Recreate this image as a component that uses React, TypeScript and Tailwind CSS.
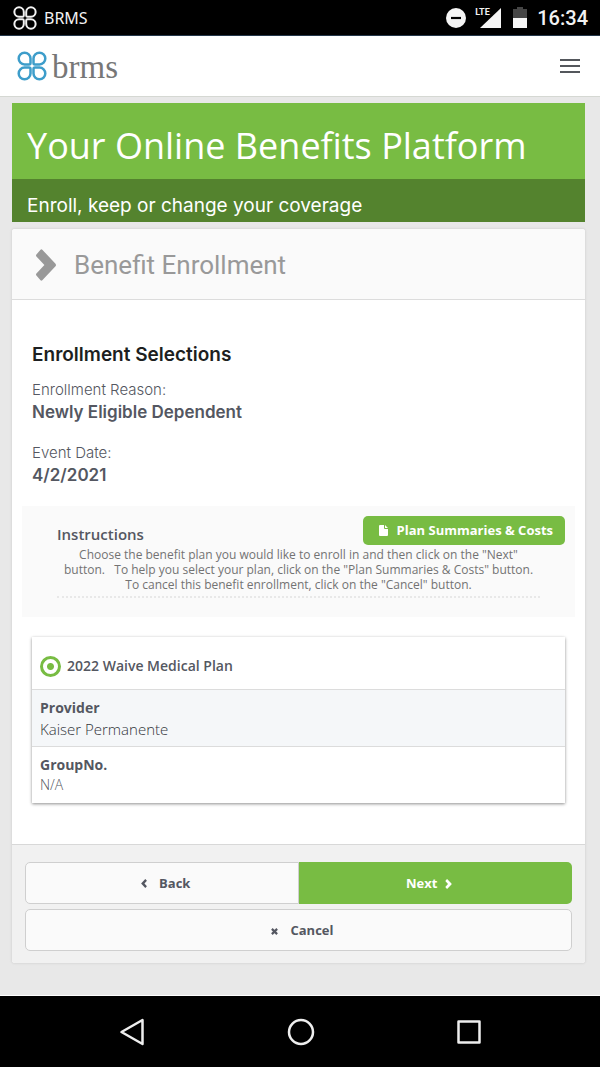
import type { ReactNode } from "react";

function Clover({ className, strokeWidth }: { className: string; strokeWidth: number }) {
  const petal = "M13.5 12V7.5A5.9 5.9 0 1 0 7.5 13.5H12Q13.5 13.5 13.5 12Z";
  return (
    <svg viewBox="0 0 30 30" className={className} fill="none" stroke="currentColor" strokeWidth={strokeWidth} strokeLinejoin="round" aria-hidden="true">
      <path d={petal} />
      <path d={petal} transform="matrix(-1 0 0 1 30 0)" />
      <path d={petal} transform="matrix(1 0 0 -1 0 30)" />
      <path d={petal} transform="matrix(-1 0 0 -1 30 30)" />
    </svg>
  );
}

function Chevron({ className, left = false }: { className: string; left?: boolean }) {
  return (
    <svg viewBox="0 0 20 32" className={className} fill="currentColor" aria-hidden="true">
      <path
        transform={left ? "matrix(-1 0 0 1 20 0)" : undefined}
        d="M.4 5.6 4.5.7Q5.4-.2 6.3.7L19.5 14.7Q20.5 16 19.5 17.3L6.3 31.3Q5.4 32.2 4.5 31.3L.4 26.4Q-.4 25.5 .4 24.6L8.4 16 .4 7.4Q-.4 6.5 .4 5.6Z"
      />
    </svg>
  );
}

function StatusBar() {
  return (
    <div className="flex h-9 items-center justify-between border-b border-[#24374a] bg-black pr-3 pl-[13px] text-[#f2f2f2]">
      <div className="flex items-center gap-[7px]">
        <Clover className="size-6" strokeWidth={2.5} />
        <span className="font-['Noto_Sans',sans-serif] text-base leading-6">BRMS</span>
      </div>
      <div className="flex items-center">
        <svg viewBox="0 0 20 20" className="size-5" aria-hidden="true">
          <circle cx="10" cy="10" r="10" fill="#f5f5f5" />
          <path d="M5 10H15" stroke="#000" strokeWidth="2.2" />
        </svg>
        <div className="relative ml-[9px] h-5 w-[26px]">
          <svg viewBox="0 0 26 20" className="h-5 w-[26px]" aria-hidden="true">
            <path d="M26 0V20H5Z" fill="#f5f5f5" />
          </svg>
          <span className="absolute top-0 left-0 bg-black font-['Roboto',sans-serif] text-[9px] leading-2 font-bold">LTE</span>
        </div>
        <svg viewBox="0 0 14 21" className="ml-3 h-[21px] w-[14px]" aria-hidden="true">
          <path d="M0 2H4V0H10V2H14V11H0Z" fill="#454545" />
          <path d="M0 11H14V21H0Z" fill="#f5f5f5" />
        </svg>
        <span className="ml-[10px] pt-px font-['Roboto',sans-serif] text-xl leading-6 font-medium">16:34</span>
      </div>
    </div>
  );
}

function Field({ label, value }: { label: string; value: string }) {
  return (
    <div>
      <dt className="text-[15px] leading-[22px] font-light">{label}</dt>
      <dd className="text-[17px] leading-[22px] font-semibold">{value}</dd>
    </div>
  );
}

function OutlineButton({ children, className }: { children: ReactNode; className: string }) {
  return (
    <button type="button" className={`flex h-[42px] items-center justify-center border border-[#cfcfcf] bg-[#fafafa] pt-px pl-2 text-[13px] font-bold text-[#545761] ${className}`}>
      {children}
    </button>
  );
}

export default function App() {
  return (
    <div className="flex min-h-screen flex-col bg-[#e8e8e8] font-['Open_Sans',sans-serif] text-[#545761]">
      <StatusBar />
      <header className="flex h-[61px] items-center justify-between border-b border-[#d5d8d3] bg-white pr-5 pl-[17px]">
        <a href="#home" className="flex items-center gap-[5px]">
          <Clover className="size-[30px] text-[#3d9dca]" strokeWidth={2.5} />
          <span className="pt-[2px] font-['Liberation_Serif',serif] text-[33px] leading-9 text-[#777]">brms</span>
        </a>
        <button type="button" aria-label="Open menu" className="flex w-5 flex-col gap-1">
          <span className="h-[2px] bg-[#54575c]" />
          <span className="h-[2px] bg-[#54575c]" />
          <span className="h-[2px] bg-[#54575c]" />
        </button>
      </header>

      <main className="flex-1 pt-[6px] pr-[15px] pb-8 pl-3">
        <section className="text-white">
          <h1 className="bg-[#78bc43] px-[15px] pt-[19px] pb-[9px] text-4xl leading-[48px]">Your Online Benefits Platform</h1>
          <p className="bg-[#54832e] px-[15px] pt-[15px] pb-1 font-['Inter',sans-serif] text-[19px] leading-6">Enroll, keep or change your coverage</p>
        </section>

        <section className="mt-[7px] rounded-[3px] bg-white shadow-[0_0_2px_1px_#d9d9d9]">
          <header className="flex items-center gap-[18px] rounded-t-[3px] border-b border-[#dcdcdc] bg-[#fafafa] px-6 pt-5 pb-[18px] text-[#999]">
            <Chevron className="h-8 w-5" />
            <h2 className="font-['Roboto',sans-serif] text-[26px] leading-8">Benefit Enrollment</h2>
          </header>

          <div className="px-5 pt-[43px] pb-[41px]">
            <div className="font-['Inter',sans-serif]">
              <h3 className="text-[19px] leading-6 font-semibold text-[#1d1f21]">Enrollment Selections</h3>
              <dl className="mt-3 flex flex-col gap-[19px]">
                <Field label="Enrollment Reason:" value="Newly Eligible Dependent" />
                <Field label="Event Date:" value="4/2/2021" />
              </dl>
            </div>

            <section className="-mx-[10px] mt-5 bg-[#fafafa] px-[10px] pt-[10px] pb-[19px]">
              <div className="flex items-center justify-between pl-[25px]">
                <h4 className="pt-[6px] text-[15px] leading-5 font-semibold">Instructions</h4>
                <button type="button" className="flex h-[29px] items-center gap-[9px] rounded-[5px] bg-[#78bc43] pr-3 pl-4 text-[13px] font-bold text-white">
                  <svg viewBox="0 0 9 11" className="h-[11px] w-[9px]" fill="currentColor" aria-hidden="true">
                    <path d="M0 1Q0 0 1 0H5V3Q5 4 6 4H9V10Q9 11 8 11H1Q0 11 0 10ZM6 0 9 3H6Z" />
                  </svg>
                  Plan Summaries &amp; Costs
                </button>
              </div>
              <p className="mx-[25px] border-b-2 border-dotted border-[#e8e8e8] pt-[2px] pb-1 text-center text-xs leading-[15px] text-[#737373]">
                Choose the benefit plan you would like to enroll in and then click on the "Next"
                <br />
                button. &nbsp; To help you select your plan, click on the "Plan Summaries &amp; Costs" button.
                <br />
                To cancel this benefit enrollment, click on the "Cancel" button.
              </p>
            </section>

            <section className="mt-5 bg-white shadow-[0_1px_3px_#8f8f8f]">
              <div className="flex h-[53px] items-center gap-[6px] border-b border-[#dcdcdc] px-2 pt-[6px]">
                <input
                  id="waive-medical"
                  type="radio"
                  name="plan"
                  defaultChecked
                  className="size-[21px] appearance-none rounded-full border-[3px] border-[#78bc43] bg-white checked:bg-[radial-gradient(circle,#78bc43_3px,#ffffff_4px)]"
                />
                <label htmlFor="waive-medical" className="text-sm font-semibold">2022 Waive Medical Plan</label>
              </div>
              <dl>
                <div className="border-b border-[#dcdcdc] bg-[#f5f7f9] px-2 pt-2 pb-[6px]">
                  <dt className="text-sm leading-5 font-bold">Provider</dt>
                  <dd className="text-[15px] leading-[22px] font-light text-[#33353b]">Kaiser Permanente</dd>
                </div>
                <div className="px-2 pt-2 pb-2">
                  <dt className="text-sm leading-5 font-bold">GroupNo.</dt>
                  <dd className="text-sm leading-5 font-light">N/A</dd>
                </div>
              </dl>
            </section>
          </div>

          <footer className="grid grid-cols-2 gap-y-[5px] rounded-b-[3px] border-t border-[#d8d8d8] bg-[#f1f1f1] px-[13px] pt-[17px] pb-3">
            <OutlineButton className="gap-3 rounded-l-[5px]">
              <Chevron left className="h-[9px] w-[6px]" />
              Back
            </OutlineButton>
            <button type="button" className="flex h-[42px] items-center justify-center gap-2 rounded-r-[5px] bg-[#78bc43] pt-px pr-3 text-[13px] font-bold text-white">
              Next
              <Chevron className="h-[10px] w-[7px]" />
            </button>
            <OutlineButton className="col-span-2 gap-3 rounded-[5px]">
              <svg viewBox="0 0 8 8" className="mt-[2px] size-[7px]" stroke="currentColor" strokeWidth="2.5" aria-hidden="true">
                <path d="M1 1 7 7M7 1 1 7" />
              </svg>
              Cancel
            </OutlineButton>
          </footer>
        </section>
      </main>

      <nav className="flex h-[72px] items-center justify-center gap-[142px] border-t border-white bg-black text-[#eee]" aria-label="System navigation">
        <button type="button" aria-label="Back">
          <svg viewBox="0 0 26 28" className="h-7 w-[26px]" fill="none" stroke="currentColor" strokeWidth="2.5" strokeLinejoin="round" aria-hidden="true">
            <path d="M2.5 14 23.5 2V26Z" />
          </svg>
        </button>
        <button type="button" aria-label="Home">
          <svg viewBox="0 0 28 28" className="size-7" fill="none" stroke="currentColor" strokeWidth="2.5" aria-hidden="true">
            <circle cx="14" cy="14" r="12" />
          </svg>
        </button>
        <button type="button" aria-label="Recent apps">
          <svg viewBox="0 0 24 24" className="size-6" fill="none" stroke="currentColor" strokeWidth="2.5" strokeLinejoin="round" aria-hidden="true">
            <path d="M1.5 1.5H22.5V22.5H1.5Z" />
          </svg>
        </button>
      </nav>
    </div>
  );
}
